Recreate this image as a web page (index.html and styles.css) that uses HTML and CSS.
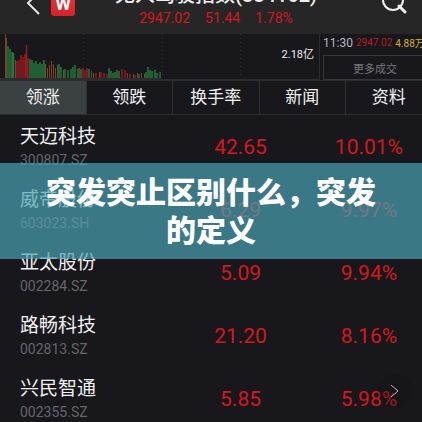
FILE: index.html
```
<!DOCTYPE html>
<html lang="zh-CN">
<head>
<meta charset="utf-8">
<meta name="viewport" content="width=device-width, initial-scale=1">
<title>突发突止区别什么，突发的定义</title>
<link rel="stylesheet" href="styles.css">
</head>
<body>
<main class="app">
  <header class="header">
    <div class="side side-left">
      <button class="icon-button" type="button" aria-label="返回">
        <svg width="16" height="24" viewBox="0 0 16 24"><path d="M14 0 3 11l11 11" fill="none" stroke="#e8e8e8" stroke-width="2"/></svg>
      </button>
      <span class="logo">W</span>
    </div>
    <div class="heading">
      <h1 class="title">无人驾驶指数(884162)</h1>
      <div class="quote"><span>2947.02</span><span>51.44</span><span>1.78%</span></div>
    </div>
    <div class="side side-right">
      <button class="icon-button" type="button" aria-label="搜索">
        <svg width="26" height="26" viewBox="0 0 26 26"><circle cx="12" cy="12" r="10" fill="none" stroke="#f0f0f0" stroke-width="2"/><path d="m18 18 6 6" stroke="#f0f0f0" stroke-width="3" stroke-linecap="round"/></svg>
      </button>
    </div>
  </header>

  <section class="market">
    <div class="chart">
      <svg class="bars" width="250" height="46" viewBox="0 0 250 46">
        <path d="M83.5 0v44M162.5 0v44M240.500 0v44" stroke="#303036" stroke-dasharray="1 3"/>
        <path d="M0 44.500h162" stroke="#2b2b30"/>
        <path d="M5.500 44V0M6.500 44V4M15.500 44V26M47.500 44V34M49.500 44V31M51.500 44V27M53.500 44V30M55.500 44V34M57.500 44V31M77.500 44V35M91.500 44V37M99.500 44V38M127.500 44V39M133.500 44V40M137.500 44V39M141.500 44V39M144.500 44V40" stroke="#7b4326"/>
        <path d="M17 44V27M19 44V26M21 44V21M23 44V23M25 44V20M26.500 44V11M28 44V24M83 44V34M85 44V36M87 44V34M96 44V39M101 44V38M104 44V39M107 44V40M122 44V35M125 44V36M130 44V40M135 44V41" stroke="#921b20" stroke-width="1.500"/>
        <path d="M8 44V12M10 44V15M12 44V18M13.500 44V19M30 44V25M32 44V26M34 44V29M36 44V27M38 44V30M40 44V28M42 44V30M44 44V26M59 44V30M61 44V33M65 44V35M68 44V36M71 44V35M73 44V33M75 44V31M79 44V34M81 44V35M89 44V35M109 44V34M111 44V37M113 44V39M115 44V38M117 44V36M119 44V37M139 44V40M146 44V38M148 44V33M150 44V36M152 44V37M155 44V36M157 44V39M160 44V38" stroke="#207a3c" stroke-width="1.500"/>
        <path d="M45.500 44V30M63.500 44V36M93.500 44V39" stroke="#55602b"/>
      </svg>
      <span class="volume">2.18亿</span>
    </div>
    <div class="trades">
      <div class="tick"><span class="time">11:30</span><span class="deal">2947.02</span><span class="lot">4.88万</span></div>
      <button class="more" type="button">更多成交</button>
    </div>
  </section>

  <nav class="tabs">
    <a class="tab active" href="#up">领涨</a>
    <a class="tab" href="#down">领跌</a>
    <a class="tab" href="#turnover">换手率</a>
    <a class="tab" href="#news">新闻</a>
    <a class="tab" href="#info">资料</a>
  </nav>

  <table class="stocks" id="up">
    <tbody>
      <tr><th scope="row"><span class="name">天迈科技</span><span class="code">300807.SZ</span></th><td class="price">42.65</td><td class="change">10.01%</td></tr>
      <tr><th scope="row"><span class="name">威帝股份</span><span class="code">603023.SH</span></th><td class="price">6.29</td><td class="change">9.97%</td></tr>
      <tr><th scope="row"><span class="name">亚太股份</span><span class="code">002284.SZ</span></th><td class="price">5.09</td><td class="change">9.94%</td></tr>
      <tr><th scope="row"><span class="name">路畅科技</span><span class="code">002813.SZ</span></th><td class="price">21.20</td><td class="change">8.16%</td></tr>
      <tr><th scope="row"><span class="name">兴民智通</span><span class="code">002355.SZ</span></th><td class="price">5.85</td><td class="change">5.98%</td></tr>
    </tbody>
  </table>

  <button class="float" type="button" aria-label="下一页">
    <svg width="10" height="14" viewBox="0 0 10 14"><path d="m1 1 7 6-7 6" fill="none" stroke="#b5b5b8"/></svg>
  </button>
  <div class="banner"><p class="banner-text">突发突止区别什么，突发的定义</p></div>
</main>
</body>
</html>
```
FILE: styles.css
```
* {
  box-sizing: border-box;
}

body {
  margin: 0;
  background: #18171c;
  color: #f0f0f0;
  font-family: Roboto, "Noto Sans CJK SC", sans-serif;
}

button {
  padding: 0;
  border: 0;
  background: none;
  color: inherit;
  font-family: inherit;
}

svg {
  display: block;
}

.app {
  position: relative;
  overflow: hidden;
}

.header {
  display: grid;
  grid-template-columns: 1fr auto 1fr;
  align-content: end;
  align-items: end;
  height: 34px;
  padding: 0 15px 0 25px;
  overflow: hidden;
  background: #262626;
}

.side {
  display: flex;
  align-items: flex-end;
  gap: 10px;
}

.side-left {
  padding-bottom: 18px;
}

.side-right {
  justify-content: flex-end;
  padding-bottom: 20px;
}

.icon-button {
  flex: none;
}

.logo {
  flex: none;
  width: 24px;
  height: 24px;
  border-radius: 3px;
  background: linear-gradient(#ee3038, #d8232b);
  color: #fff;
  font-size: 18px;
  font-weight: 700;
  line-height: 24px;
  text-align: center;
}

.title {
  margin: 0 0 3px;
  font-size: 20px;
  font-weight: 500;
  line-height: 24px;
  white-space: nowrap;
}

.quote {
  display: flex;
  justify-content: center;
  gap: 15px;
  padding-bottom: 8px;
  color: #d5171f;
  font-size: 14px;
  line-height: 16px;
}

.market {
  display: flex;
  height: 46px;
}

.chart {
  display: flex;
  flex: 1;
  align-items: center;
  justify-content: space-between;
  padding-right: 5px;
  border-right: 1px solid #2b2b30;
  border-bottom: 1px solid #2b2b30;
}

.volume {
  padding-bottom: 4px;
  font-size: 11px;
  line-height: 16px;
}

.trades {
  width: 102px;
  padding-left: 3px;
  overflow: hidden;
}

.tick {
  display: flex;
  align-items: center;
  gap: 3px;
  height: 17px;
  margin-bottom: 4px;
  font-size: 10px;
  white-space: nowrap;
}

.time {
  color: #b8b8bc;
  font-size: 12px;
}

.deal {
  color: #b81e25;
}

.lot {
  color: #d5ae35;
}

.more {
  width: 104px;
  height: 25px;
  border: 1px solid #37373b;
  color: #77777b;
  font-size: 11px;
}

.tabs {
  display: grid;
  grid-template-columns: repeat(5, 20.5%);
  height: 35px;
  overflow: hidden;
  border-top: 1px solid #2b2b30;
  border-bottom: 1px solid #2b2b30;
}

.tab {
  border-right: 1px solid #2f2f34;
  color: #f0f0f0;
  font-size: 17px;
  line-height: 32px;
  text-align: center;
  text-decoration: none;
}

.active {
  background: #3b4043;
}

.stocks {
  width: 100%;
  border-collapse: collapse;
  table-layout: fixed;
}

.stocks tr {
  height: 63px;
}

.stocks th {
  width: 42%;
  padding: 0 0 0 20px;
  font-weight: 400;
  text-align: left;
}

.stocks td {
  padding: 0;
  color: #d5171f;
  font-size: 21px;
  line-height: 24px;
  text-align: center;
}

.stocks .price {
  width: 30%;
}

.stocks .change {
  padding-left: 12px;
}

.name,
.code {
  display: block;
}

.name {
  font-size: 19px;
  line-height: 26px;
}

.code {
  color: #66656a;
  font-size: 14px;
  line-height: 20px;
}

.banner {
  position: absolute;
  top: 163px;
  right: 0;
  left: 0;
  padding: 8px 40px 12px;
  background: rgba(74, 163, 178, 0.7);
}

.banner-text {
  margin: 0;
  color: #fff;
  font-family: "Noto Sans CJK SC", sans-serif;
  font-size: 30px;
  font-weight: 900;
  line-height: 38px;
  text-align: center;
}

.float {
  position: absolute;
  right: 10px;
  bottom: 22px;
  display: grid;
  place-items: center;
  width: 34px;
  height: 34px;
  border-radius: 50%;
  background: rgba(16, 16, 18, 0.25);
}
```
